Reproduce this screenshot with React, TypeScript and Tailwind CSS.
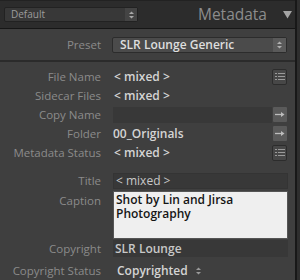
import React from 'react';

const font = { fontFamily: '"Open Sans", "Liberation Sans", sans-serif' };

function Stepper({ className = '' }: { className?: string }) {
  return (
    <svg width="7" height="10" viewBox="0 0 7 10" className={className}>
      <path d="M1 4 L3.5 1.5 L6 4 Z" fill="currentColor" />
      <path d="M1 6 L3.5 8.5 L6 6 Z" fill="currentColor" />
    </svg>
  );
}

function ListButton() {
  return (
    <div className="w-[15px] h-[16px] flex flex-col items-center justify-center gap-[2px] bg-[#474747] border border-[#2c2c2c] rounded-[2px]">
      <div className="flex gap-[1px]">
        <div className="w-[2px] h-[1px] bg-[#9a9a9a]" />
        <div className="w-[7px] h-[1px] bg-[#9a9a9a]" />
      </div>
      <div className="flex gap-[1px]">
        <div className="w-[2px] h-[1px] bg-[#9a9a9a]" />
        <div className="w-[7px] h-[1px] bg-[#9a9a9a]" />
      </div>
      <div className="flex gap-[1px]">
        <div className="w-[2px] h-[1px] bg-[#9a9a9a]" />
        <div className="w-[7px] h-[1px] bg-[#9a9a9a]" />
      </div>
    </div>
  );
}

function ArrowButton() {
  return (
    <div className="w-[14px] h-[15px] flex items-center justify-center bg-[#5a5a5a] rounded-[1px]">
      <svg width="10" height="7" viewBox="0 0 10 7">
        <path d="M0 3.5 H6" stroke="#bdbdbd" strokeWidth="1.3" />
        <path d="M6 1 L9.5 3.5 L6 6 Z" fill="#bdbdbd" />
      </svg>
    </div>
  );
}

function Row({ label, children, action }: { label: string; children?: React.ReactNode; action?: React.ReactNode }) {
  return (
    <div className="h-[19px] flex items-center">
      <div className="w-[101px] text-right text-[11.5px] text-[#8b8b8b] whitespace-nowrap">{label}</div>
      <div className="ml-[12px] w-[159px] h-full flex items-center">{children}</div>
      <div className="w-[15px] flex justify-center">{action}</div>
    </div>
  );
}

export default function App() {
  return (
    <div className="w-[300px] h-[280px] flex bg-[#2e2e2e] overflow-hidden" style={font}>
      <div className="w-[295px] flex flex-col">
        {/* header */}
        <div className="h-[31px] bg-[#2c2c2c] border-t border-t-[#222] border-b border-b-[#161616] flex items-center pl-[4px] pr-[3px]">
          <div className="w-[134px] h-[15px] flex items-center bg-[#383838] border border-[#222] rounded-[2px]">
            <span className="flex-1 pl-[6px] text-[10px] text-[#9c9c9c]">Default</span>
            <div className="w-[12px] h-full flex items-center justify-center bg-[#444] text-[#a8a8a8]">
              <Stepper />
            </div>
          </div>
          <span className="ml-auto text-[15.5px] text-[#8c8c8c] leading-none">Metadata</span>
          <svg width="9" height="8" viewBox="0 0 9 8" className="ml-[16px]">
            <path d="M0 0 H9 L4.5 7.5 Z" fill="#a4a4a4" />
          </svg>
        </div>

        <div className="flex-1 bg-[#3f3f3f] flex flex-col">
          {/* preset */}
          <div className="h-[31px] flex items-center">
            <div className="w-[101px] text-right text-[11.5px] text-[#8b8b8b]">Preset</div>
            <div className="ml-[11px] w-[175px] h-[16px] flex items-center bg-[#4b4b4b] border border-[#2c2c2c] rounded-[2px]">
              <span className="flex-1 pl-[7px] text-[12px] font-semibold text-[#dedede] leading-none">SLR Lounge Generic</span>
              <div className="w-[13px] h-full flex items-center justify-center bg-[#5a5a5a] text-[#b0b0b0]">
                <Stepper />
              </div>
            </div>
          </div>
          <div className="h-[2px] bg-[#2b2b2b]" />

          <div className="mt-[5px] flex flex-col">
            <Row label="File Name" action={<ListButton />}>
              <span className="pl-[1px] text-[12px] font-semibold text-[#d4d4d4]">&lt; mixed &gt;</span>
            </Row>
            <Row label="Sidecar Files">
              <span className="pl-[1px] text-[12px] font-semibold text-[#d4d4d4]">&lt; mixed &gt;</span>
            </Row>
            <Row label="Copy Name" action={<ArrowButton />}>
              <div className="w-full h-[16px] bg-[#383838]" />
            </Row>
            <Row label="Folder" action={<ArrowButton />}>
              <span className="text-[12px] font-semibold text-[#d4d4d4]">00_Originals</span>
            </Row>
            <Row label="Metadata Status" action={<ListButton />}>
              <span className="pl-[1px] text-[12px] font-semibold text-[#d4d4d4]">&lt; mixed &gt;</span>
            </Row>
          </div>

          <div className="mt-[11px] flex flex-col gap-[1px]">
            <div className="h-[16px] flex items-center">
              <div className="w-[101px] text-right text-[11.5px] text-[#8b8b8b]">Title</div>
              <div className="ml-[12px] w-[175px] h-full flex items-center bg-[#383838] border border-[#343434]">
                <span className="pl-[2px] text-[12px] text-[#c8c8c8]">&lt; mixed &gt;</span>
              </div>
            </div>
            <div className="mt-[1px] h-[48px] flex">
              <div className="w-[101px] text-right text-[11.5px] text-[#8b8b8b] pt-[1px]">Caption</div>
              <div className="ml-[12px] w-[175px] h-full bg-[#efefef] border border-[#555] pl-[2px] pt-[1px] text-[12px] font-semibold text-[#151515]">
                <div className="h-[14px] leading-[14px]">Shot by Lin and Jirsa</div>
                <div className="h-[14px] leading-[14px]">Photography</div>
              </div>
            </div>
            <div className="h-[17px] flex items-center">
              <div className="w-[101px] text-right text-[11.5px] text-[#8b8b8b]">Copyright</div>
              <div className="ml-[12px] w-[175px] h-full flex items-center bg-[#383838]">
                <span className="pl-[2px] text-[12px] font-semibold text-[#c8c8c8]">SLR Lounge</span>
              </div>
            </div>
            <div className="mt-[4px] h-[18px] flex items-center">
              <div className="w-[101px] text-right text-[11.5px] text-[#8b8b8b]">Copyright Status</div>
              <span className="ml-[16px] text-[12px] font-semibold text-[#d4d4d4]">Copyrighted</span>
              <Stepper className="ml-[7px] text-[#9a9a9a]" />
            </div>
          </div>
        </div>
      </div>
      <div className="w-[2px] bg-[#181818]" />
    </div>
  );
}
